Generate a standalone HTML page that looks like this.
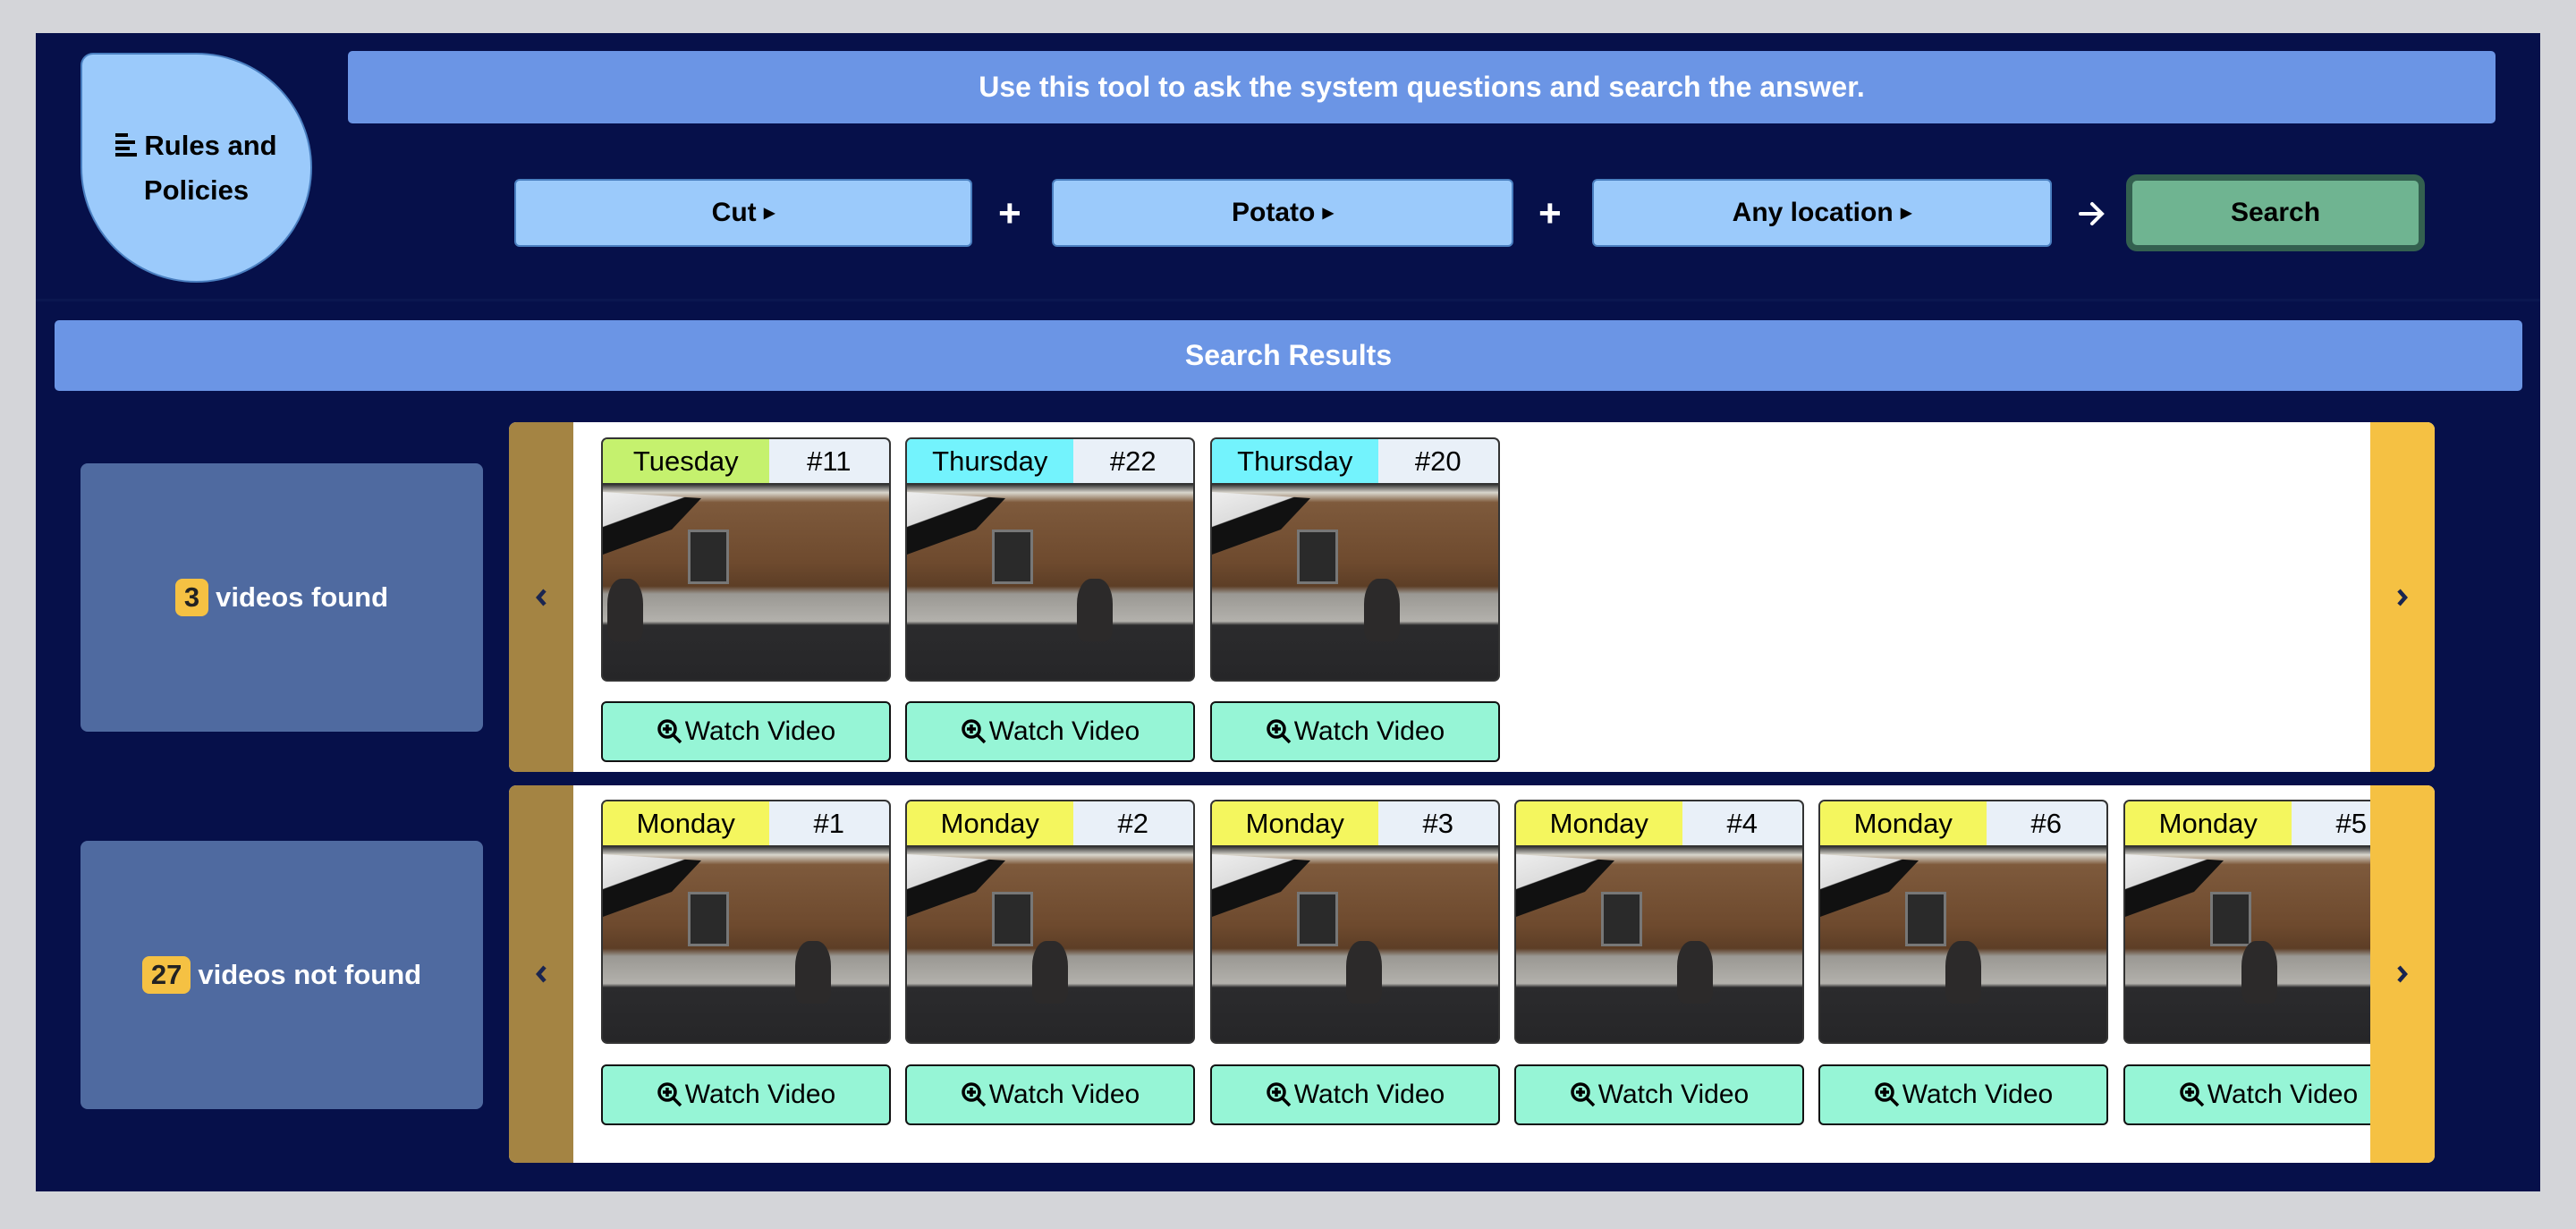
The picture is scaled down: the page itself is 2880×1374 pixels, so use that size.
<!DOCTYPE html>
<html><head><meta charset="utf-8"><style>
*{box-sizing:border-box;margin:0;padding:0}
body{width:2880px;height:1374px;background:#d4d5d9;font-family:"Liberation Sans",sans-serif;position:relative;overflow:hidden}
.abs{position:absolute}
#panel{left:40px;top:37px;width:2800px;height:1295px;background:#06104a}
#rules{left:90px;top:59px;width:259px;height:257px;background:#9bcafb;border:2px solid #4a7fc0;border-radius:14px 50% 50% 50% / 14px 50% 50% 50%;display:flex;align-items:center;justify-content:center;text-align:center;font-weight:bold;font-size:31px;line-height:47px;color:#000}
.banner{background:#6b95e5;color:#fff;font-weight:bold;font-size:32px;display:flex;align-items:center;justify-content:center;border-radius:5px}
.sel{top:200px;height:76px;background:#9bcafb;border:2px solid #4a7fc0;border-radius:6px;display:flex;align-items:center;justify-content:center;font-weight:bold;font-size:30px;color:#000}
.op{color:#fff;font-weight:bold;font-size:44px;top:214px}
#search{left:2377px;top:195px;width:334px;height:86px;background:#6fb491;border:7px solid #33604f;border-radius:12px;display:flex;align-items:center;justify-content:center;font-weight:bold;font-size:30px;color:#000}
.info{left:90px;width:450px;height:300px;background:#4f6aa0;border-radius:8px;display:flex;justify-content:center;align-items:center;color:#fff;font-weight:bold;font-size:31px}
.badge{background:#f5c143;color:#222;border-radius:8px;padding:3px 10px;margin-right:8px}
.car{left:569px;width:2153px;border-radius:8px;overflow:hidden;background:#fff}
.lb{position:absolute;left:0;top:0;bottom:0;width:72px;background:#a48443;display:flex;align-items:center;justify-content:center}
.rb{position:absolute;right:0;top:0;bottom:0;width:72px;background:#f5c143;display:flex;align-items:center;justify-content:center}
.inner{position:absolute;left:72px;right:72px;top:0;bottom:0;overflow:hidden}
.card{position:absolute;width:324px}
.hd{height:51px;border:2px solid #333;border-bottom:none;border-radius:7px 7px 0 0;display:flex;overflow:hidden;font-size:31px;background:#e9f0f8}
.hd .d{width:58%;display:flex;align-items:center;justify-content:center}
.hd .n{flex:1;display:flex;align-items:center;justify-content:center}
.img{height:222px;border:2px solid #333;border-radius:0 0 7px 7px;position:relative;overflow:hidden;
background:linear-gradient(180deg,#3a3a3a 0%,#d9d6cd 4%,#7e5a3c 9%,#6e4a2e 40%,#5d3e26 52%,#9a9893 56%,#b3b1ac 70%,#2b2b2d 72%,#262628 100%)}
.img:before{content:"";position:absolute;left:0;top:8px;width:110px;height:70px;background:linear-gradient(160deg,#eee 0,#ddd 35%,#111 36%,#111 100%);clip-path:polygon(0 0,100% 10%,70% 60%,0 100%)}
.img:after{content:"";position:absolute;left:95px;top:50px;width:40px;height:55px;background:#2a2a2a;border:3px solid #777}
.p{position:absolute;width:40px;height:70px;background:#2c2a2a;border-radius:40% 40% 20% 20%;top:105px;z-index:2}
.b{position:absolute;left:0;width:324px;height:68px;background:#96f5d6;border:2px solid #111;border-radius:6px;display:flex;align-items:center;justify-content:center;font-size:30px;color:#000}
.b svg{margin-right:2px}
</style></head><body>
<div id="panel" class="abs"></div>
<div class="abs" style="left:40px;top:334px;width:2800px;height:3px;background:#0b1750"></div>
<div id="rules" class="abs"><div><span style="display:inline-block;vertical-align:middle;margin-right:6px"><svg width="26" height="28" viewBox="0 0 26 28"><rect x="0" y="1" width="14" height="4" fill="#000"/><rect x="0" y="9" width="22" height="4" fill="#000"/><rect x="0" y="16" width="16" height="4" fill="#000"/><rect x="0" y="23" width="24" height="4" fill="#000"/></svg></span>Rules and<br>Policies</div></div>
<div class="abs banner" style="left:389px;top:57px;width:2401px;height:81px">Use this tool to ask the system questions and search the answer.</div>
<div class="abs sel" style="left:575px;width:512px">Cut&nbsp;<span style="font-size:16px">▶</span></div>
<div class="abs op" style="left:1116px">+</div>
<div class="abs sel" style="left:1176px;width:516px">Potato&nbsp;<span style="font-size:16px">▶</span></div>
<div class="abs op" style="left:1720px">+</div>
<div class="abs sel" style="left:1780px;width:514px">Any location&nbsp;<span style="font-size:16px">▶</span></div>
<div class="abs" style="left:2323px;top:222px"><svg width="30" height="34" viewBox="0 0 30 34"><path d="M3 17H26M16 6L27 17L16 28" stroke="#fff" stroke-width="4" fill="none" stroke-linecap="round"/></svg></div>
<div id="search" class="abs">Search</div>
<div class="abs banner" style="left:61px;top:358px;width:2759px;height:79px">Search Results</div>

<div class="abs info" style="top:518px"><span class="badge">3</span>videos found</div>
<div class="abs info" style="top:940px"><span class="badge">27</span>videos not found</div>

<div class="abs car" style="top:472px;height:391px">
<div class="lb"><svg width="20" height="30" viewBox="0 0 20 30"><path d="M14 7L7 15L14 23" stroke="#1a2550" stroke-width="4.5" fill="none"/></svg></div>
<div class="inner">
<div class="card" style="left:31px;top:17px"><div class="hd"><div class="d" style="background:#c5f16e">Tuesday</div><div class="n">#11</div></div><div class="img"><div class="p" style="left:5px"></div></div></div>
<div class="card" style="left:371px;top:17px"><div class="hd"><div class="d" style="background:#73f3fd">Thursday</div><div class="n">#22</div></div><div class="img"><div class="p" style="left:190px"></div></div></div>
<div class="card" style="left:712px;top:17px"><div class="hd"><div class="d" style="background:#73f3fd">Thursday</div><div class="n">#20</div></div><div class="img"><div class="p" style="left:170px"></div></div></div>
<div class="b" style="left:31px;top:312px"><svg width="30" height="30" viewBox="0 0 30 30"><circle cx="12" cy="12" r="9" stroke="#000" stroke-width="3.5" fill="none"/><path d="M12 7V17M7 12H17M18 18L27 27" stroke="#000" stroke-width="3.5"/></svg>Watch Video</div>
<div class="b" style="left:371px;top:312px"><svg width="30" height="30" viewBox="0 0 30 30"><circle cx="12" cy="12" r="9" stroke="#000" stroke-width="3.5" fill="none"/><path d="M12 7V17M7 12H17M18 18L27 27" stroke="#000" stroke-width="3.5"/></svg>Watch Video</div>
<div class="b" style="left:712px;top:312px"><svg width="30" height="30" viewBox="0 0 30 30"><circle cx="12" cy="12" r="9" stroke="#000" stroke-width="3.5" fill="none"/><path d="M12 7V17M7 12H17M18 18L27 27" stroke="#000" stroke-width="3.5"/></svg>Watch Video</div>
</div>
<div class="rb"><svg width="20" height="30" viewBox="0 0 20 30"><path d="M6 7L13 15L6 23" stroke="#1a2550" stroke-width="4.5" fill="none"/></svg></div>
</div>

<div class="abs car" style="top:878px;height:422px">
<div class="lb"><svg width="20" height="30" viewBox="0 0 20 30"><path d="M14 7L7 15L14 23" stroke="#1a2550" stroke-width="4.5" fill="none"/></svg></div>
<div class="inner">
<div class="card" style="left:31px;top:16px"><div class="hd"><div class="d" style="background:#f4f65e">Monday</div><div class="n">#1</div></div><div class="img"><div class="p" style="left:215px"></div></div></div>
<div class="card" style="left:371px;top:16px"><div class="hd"><div class="d" style="background:#f4f65e">Monday</div><div class="n">#2</div></div><div class="img"><div class="p" style="left:140px"></div></div></div>
<div class="card" style="left:712px;top:16px"><div class="hd"><div class="d" style="background:#f4f65e">Monday</div><div class="n">#3</div></div><div class="img"><div class="p" style="left:150px"></div></div></div>
<div class="card" style="left:1052px;top:16px"><div class="hd"><div class="d" style="background:#f4f65e">Monday</div><div class="n">#4</div></div><div class="img"><div class="p" style="left:180px"></div></div></div>
<div class="card" style="left:1392px;top:16px"><div class="hd"><div class="d" style="background:#f4f65e">Monday</div><div class="n">#6</div></div><div class="img"><div class="p" style="left:140px"></div></div></div>
<div class="card" style="left:1733px;top:16px"><div class="hd"><div class="d" style="background:#f4f65e">Monday</div><div class="n">#5</div></div><div class="img"><div class="p" style="left:130px"></div></div></div>
<div class="b" style="left:31px;top:312px"><svg width="30" height="30" viewBox="0 0 30 30"><circle cx="12" cy="12" r="9" stroke="#000" stroke-width="3.5" fill="none"/><path d="M12 7V17M7 12H17M18 18L27 27" stroke="#000" stroke-width="3.5"/></svg>Watch Video</div>
<div class="b" style="left:371px;top:312px"><svg width="30" height="30" viewBox="0 0 30 30"><circle cx="12" cy="12" r="9" stroke="#000" stroke-width="3.5" fill="none"/><path d="M12 7V17M7 12H17M18 18L27 27" stroke="#000" stroke-width="3.5"/></svg>Watch Video</div>
<div class="b" style="left:712px;top:312px"><svg width="30" height="30" viewBox="0 0 30 30"><circle cx="12" cy="12" r="9" stroke="#000" stroke-width="3.5" fill="none"/><path d="M12 7V17M7 12H17M18 18L27 27" stroke="#000" stroke-width="3.5"/></svg>Watch Video</div>
<div class="b" style="left:1052px;top:312px"><svg width="30" height="30" viewBox="0 0 30 30"><circle cx="12" cy="12" r="9" stroke="#000" stroke-width="3.5" fill="none"/><path d="M12 7V17M7 12H17M18 18L27 27" stroke="#000" stroke-width="3.5"/></svg>Watch Video</div>
<div class="b" style="left:1392px;top:312px"><svg width="30" height="30" viewBox="0 0 30 30"><circle cx="12" cy="12" r="9" stroke="#000" stroke-width="3.5" fill="none"/><path d="M12 7V17M7 12H17M18 18L27 27" stroke="#000" stroke-width="3.5"/></svg>Watch Video</div>
<div class="b" style="left:1733px;top:312px"><svg width="30" height="30" viewBox="0 0 30 30"><circle cx="12" cy="12" r="9" stroke="#000" stroke-width="3.5" fill="none"/><path d="M12 7V17M7 12H17M18 18L27 27" stroke="#000" stroke-width="3.5"/></svg>Watch Video</div>
</div>
<div class="rb"><svg width="20" height="30" viewBox="0 0 20 30"><path d="M6 7L13 15L6 23" stroke="#1a2550" stroke-width="4.5" fill="none"/></svg></div>
</div>
</body></html>
